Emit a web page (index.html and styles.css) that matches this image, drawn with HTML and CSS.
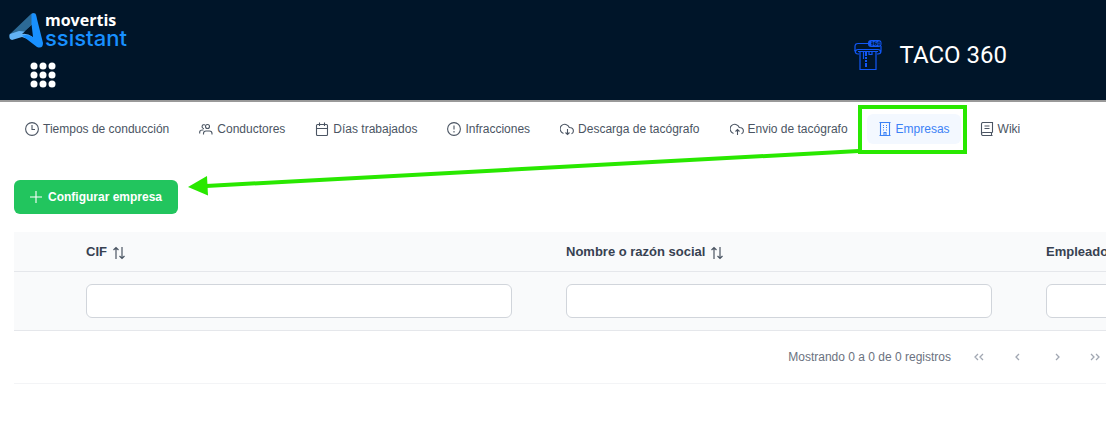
FILE: index.html
```html
<!DOCTYPE html>
<html lang="es">

<head>
  <meta charset="utf-8">
  <meta name="viewport" content="width=device-width, initial-scale=1">
  <title>TACO 360 - Empresas</title>
  <link rel="stylesheet" href="styles.css">
</head>

<body>
  <header class="topbar">
    <div class="brand">
      <a class="logo" href="#" aria-label="Movertis Assistant">
        <svg class="logo-mark" width="35" height="37" viewBox="0 0 35 37">
          <path fill="#2c6a96" d="M22 2Q25 0 27 2L28 12 23 13 13 22 4 27 0 23Z"/>
          <path fill="#63b3f5" d="M1 22 10 19 20 20 27 30 13 25 3 28Q-1 27 1 22Z"/>
          <path fill="#001529" d="M23 13 13 22Q18 21 24 25Z"/>
          <path fill="#1890ff" d="M22.500 2Q25 0 27 3L34 31Q34 37 28 35L13 23.500Q19 22 24 25L22.500 12Z"/>
        </svg>
        <span class="logo-text">
          <span class="logo-name">movertis</span>
          <span class="logo-product">ssistant</span>
        </span>
      </a>
      <button class="apps" type="button" aria-label="Aplicaciones">
        <svg width="26" height="26" viewBox="0 0 26 26" fill="#fff">
          <circle cx="4" cy="4" r="3.500"/><circle cx="13" cy="4" r="3.500"/><circle cx="22" cy="4" r="3.500"/>
          <circle cx="4" cy="13" r="3.500"/><circle cx="13" cy="13" r="3.500"/><circle cx="22" cy="13" r="3.500"/>
          <circle cx="4" cy="22" r="3.500"/><circle cx="13" cy="22" r="3.500"/><circle cx="22" cy="22" r="3.500"/>
        </svg>
      </button>
    </div>
    <div class="app-title">
      <svg width="28" height="31" viewBox="0 0 28 31" fill="none" stroke="#1257f5" stroke-width="1.2">
        <path d="M14 3.500H4Q1 3.500 1 6.500V11"/>
        <rect x="14" y="0" width="13.500" height="7" rx="3" fill="#1257f5" stroke="none"/>
        <path stroke="#001529" stroke-width=".8" d="M17 2h2v3h-2M17 3.500h2M20.500 2v3h2v-1.500h-2M22.500 2h-2M24 2h2v3h-2z"/>
        <path d="M27 6V11Q27 14 24 14H23M1 10Q1 14 4 14H5M1.500 11.500Q2 9.500 4 9.500H24Q26 9.500 26.500 11.500M4 11.500H24"/>
        <path d="M6 11V29.500H22V11"/>
        <path d="M9.500 12V19M15 12V14.500H18V12"/>
        <path stroke-width="2" d="M12 12V16M12 17V19M12 20V22M12 23V27"/>
      </svg>
      <h1>TACO 360</h1>
    </div>
  </header>

  <nav class="menu">
    <a class="menu-item" href="#">
      <svg class="icon" viewBox="0 0 14 14"><circle cx="7" cy="7" r="6.400"/><path d="M7 3V7.500H10"/></svg>
      Tiempos de conducción
    </a>
    <a class="menu-item" href="#">
      <svg class="icon" viewBox="0 0 14 14"><circle cx="8.500" cy="4.500" r="2"/><path d="M4.500 12.500V11.500Q4.500 9 7 9H10.500Q13 9 13 11.500V12.500M6 3A1.900 1.900 0 1 0 5 6.500M.7 11.500V10Q.7 8 3.500 8H4.500"/></svg>
      Conductores
    </a>
    <a class="menu-item" href="#">
      <svg class="icon" viewBox="0 0 14 14"><rect x="1.500" y="2.500" width="11" height="11" rx="1"/><path d="M1.500 6.500H12.500M4.500 .5V4M9.500 .5V4"/></svg>
      Días trabajados
    </a>
    <a class="menu-item" href="#">
      <svg class="icon" viewBox="0 0 14 14"><circle cx="7" cy="7" r="6.400"/><path d="M7 3.500V7.500M7 9V10.500"/></svg>
      Infracciones
    </a>
    <a class="menu-item" href="#">
      <svg class="icon" viewBox="0 0 14 14"><path d="M3.500 11.500A4.700 4.700 0 1 1 9.300 5.500Q13.400 5.500 13.400 9Q13.400 11 11.500 11.800M7.500 7V12.500M5.500 10.500 7.500 12.500 9.500 10.500"/></svg>
      Descarga de tacógrafo
    </a>
    <a class="menu-item" href="#">
      <svg class="icon" viewBox="0 0 14 14"><path d="M3.500 11.500A4.700 4.700 0 1 1 9.300 5.500Q13.400 5.500 13.400 9Q13.400 11 11.500 11.800M7.500 13V7.500M5.500 9.500 7.500 7.500 9.500 9.500"/></svg>
      Envio de tacógrafo
    </a>
    <a class="menu-item active" href="#" aria-current="page">
      <svg class="icon" viewBox="0 0 14 14"><path d="M2.500 .5H11.500V13.500H2.500ZM1.500 .5H12.500M1.500 13.500H12.500M6 13V10.500H8V13M5 3.500H6M8 3.500H9M5 5.500H6M8 5.500H9M5 8H6M8 8H9"/></svg>
      Empresas
      <svg class="arrow" width="671" height="52" viewBox="0 0 671 52">
        <path d="M671 12 18 47" stroke="#29e800" stroke-width="4"/>
        <path d="M0 48 19 37 20 56.500Z" fill="#29e800"/>
      </svg>
    </a>
    <a class="menu-item" href="#">
      <svg class="icon" viewBox="0 0 14 14"><path d="M12.500 10.500V.5H3Q1.500 .5 1.500 2V12Q1.500 13.500 3 13.500H12.500M12.500 10.500H3Q1.500 10.500 1.500 12M11.500 10.500V13.500M4.500 4H9.500M4.500 6.500H9.500"/></svg>
      Wiki
    </a>
  </nav>

  <main>
    <button class="btn-add" type="button">
      <svg class="icon" viewBox="0 0 14 14"><path d="M7 1V13M1 7H13"/></svg>
      Configurar empresa
    </button>

    <div class="table-wrap">
      <table>
        <colgroup>
          <col class="col-actions">
          <col class="col-data">
          <col class="col-data">
          <col class="col-data">
        </colgroup>
        <thead>
          <tr class="titles">
            <th></th>
            <th id="cif">CIF <svg class="sort" viewBox="0 0 14 14"><path d="M4 13V1.500M1.500 4 4 1.500 6.500 4M10 1V12.500M7.500 10 10 12.500 12.500 10"/></svg></th>
            <th id="nombre">Nombre o razón social <svg class="sort" viewBox="0 0 14 14"><path d="M4 13V1.500M1.500 4 4 1.500 6.500 4M10 1V12.500M7.500 10 10 12.500 12.500 10"/></svg></th>
            <th id="empleados">Empleados</th>
          </tr>
          <tr class="filters">
            <td></td>
            <td><input type="text" aria-labelledby="cif"></td>
            <td><input type="text" aria-labelledby="nombre"></td>
            <td><input type="text" aria-labelledby="empleados"></td>
          </tr>
        </thead>
      </table>
    </div>

    <div class="paginator">
      <span>Mostrando 0 a 0 de 0 registros</span>
      <button type="button" disabled aria-label="Primera página"><svg viewBox="0 0 12 12"><path d="M5 3 2 6 5 9M10 3 7 6 10 9"/></svg></button>
      <button type="button" disabled aria-label="Página anterior"><svg viewBox="0 0 12 12"><path d="M7 3 4 6 7 9"/></svg></button>
      <button type="button" disabled aria-label="Página siguiente"><svg viewBox="0 0 12 12"><path d="M5 3 8 6 5 9"/></svg></button>
      <button type="button" disabled aria-label="Última página"><svg viewBox="0 0 12 12"><path d="M2 3 5 6 2 9M7 3 10 6 7 9"/></svg></button>
    </div>
  </main>
</body>

</html>
```
FILE: styles.css
```css
* {
  box-sizing: border-box;
}

body {
  margin: 0;
  background-color: #fff;
  color: #4b5563;
  font-family: "Liberation Sans", Arial, sans-serif;
  font-size: 12px;
}

button {
  border: 0;
  padding: 0;
  background: none;
  font-family: inherit;
}

.topbar {
  display: flex;
  justify-content: space-between;
  align-items: flex-start;
  height: 102px;
  padding: 12px 99px 0 9px;
  border-bottom: 2px solid #999;
  background-color: #001529;
}

.logo {
  display: flex;
  gap: 1px;
  text-decoration: none;
}

.logo-text {
  display: flex;
  flex-direction: column;
}

.logo-name {
  color: #fff;
  font: 700 16px/16px "Open Sans", sans-serif;
}

.logo-product {
  color: #1890ff;
  font: 500 22px/20px Inter, sans-serif;
}

.apps {
  display: block;
  margin: 13px 0 0 21px;
}

.apps svg {
  display: block;
}

.app-title {
  display: flex;
  align-items: center;
  gap: 18px;
  padding-top: 27px;
}

.app-title h1 {
  margin: 0;
  color: #fff;
  font: 400 24px/32px Roboto, sans-serif;
}

.menu {
  display: flex;
  gap: 8px;
  padding: 12px 14px 36px;
}

.menu-item {
  position: relative;
  display: flex;
  align-items: center;
  gap: 4px;
  height: 30px;
  padding: 0 11px;
  border-radius: 6px;
  color: #4b5563;
  text-decoration: none;
  white-space: nowrap;
}

.icon {
  width: 14px;
  height: 14px;
  fill: none;
  stroke: currentColor;
  stroke-width: 1.1;
}

.menu-item.active {
  background-color: #f3f8ff;
  color: #3b82f6;
}

/* highlight around the active item */
.menu-item.active::after {
  content: "";
  position: absolute;
  inset: -9px -6px -10px -9px;
  border: 4px solid #29e800;
}

.arrow {
  position: absolute;
  top: 25px;
  right: 100%;
  margin-right: 8px;
  overflow: visible;
  pointer-events: none;
}

main {
  padding-left: 14px;
}

.btn-add {
  display: flex;
  align-items: center;
  gap: 5px;
  height: 34px;
  padding: 0 16px 0 15px;
  border-radius: 6px;
  background-color: #22c55e;
  color: #fff;
  font-size: 12px;
  font-weight: bold;
}

.table-wrap {
  margin-top: 18px;
  overflow: hidden;
}

table {
  table-layout: fixed;
  width: 1496px;
  border-collapse: separate;
  border-spacing: 0;
  background-color: #f9fafb;
}

.col-actions {
  width: 56px;
}

.col-data {
  width: 480px;
}

th,
td {
  padding: 0 16px;
  border-bottom: 1px solid #e5e7eb;
  text-align: left;
}

.titles th {
  height: 40px;
  color: #374151;
  font-size: 13px;
}

.filters td {
  height: 59px;
}

.sort {
  width: 14px;
  height: 14px;
  margin-left: 1px;
  vertical-align: -4px;
  fill: none;
  stroke: #4b5563;
  stroke-width: 1.2;
}

td input {
  display: block;
  width: 426px;
  height: 34px;
  padding: 0 10px;
  border: 1px solid #d1d5db;
  border-radius: 6px;
  background-color: #fff;
}

.paginator {
  display: flex;
  justify-content: flex-end;
  align-items: center;
  height: 53px;
  border-bottom: 1px solid #f3f4f6;
  color: #6b7280;
}

.paginator span {
  margin-right: 8px;
}

.paginator button {
  flex: none;
  width: 39px;
  height: 34px;
}

.paginator button:last-child {
  width: 30px;
  padding-left: 8px;
}

.paginator svg {
  display: block;
  width: 12px;
  height: 12px;
  margin: 0 auto;
  fill: none;
  stroke: #a1a7b2;
  stroke-width: 1.3;
}
```
